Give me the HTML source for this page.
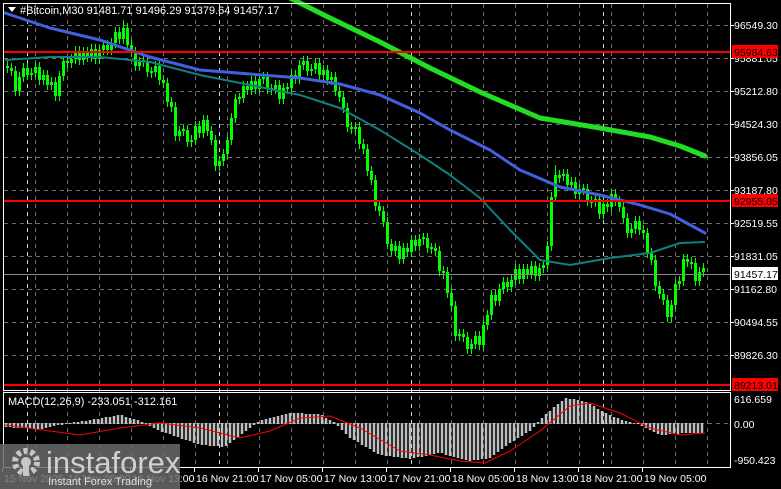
<!DOCTYPE html>
<html><head><meta charset="utf-8"><style>
html,body{margin:0;padding:0;background:#000;width:781px;height:489px;overflow:hidden}
svg{display:block;position:absolute;left:0;top:0}
</style></head><body>
<svg width="781" height="489" xmlns="http://www.w3.org/2000/svg" font-family="Liberation Sans, sans-serif">
<rect width="781" height="489" fill="#000"/>
<g stroke="#6e6e6e" stroke-dasharray="4,4" fill="none">
<path d="M4 25.5H730M4 58.5H730M4 91.5H730M4 124.5H730M4 157.5H730M4 190.5H730M4 223.5H730M4 256.5H730M4 289.5H730M4 322.5H730M4 355.5H730M4 423.5H730"/>
<path d="M3.5 4V467M35.5 4V467M67.5 4V467M99.5 4V467M131.5 4V467M163.5 4V467M195.5 4V467M227.5 4V467M259.5 4V467M291.5 4V467M323.5 4V467M355.5 4V467M387.5 4V467M419.5 4V467M451.5 4V467M483.5 4V467M515.5 4V467M547.5 4V467M579.5 4V467M611.5 4V467M643.5 4V467M675.5 4V467M707.5 4V467"/>
</g>
<path d="M27.5 4V467M219.5 4V467M411.5 4V467M603.5 4V467" stroke="#d0d0d0" stroke-dasharray="4,4" fill="none"/>

<path fill="none" stroke="#00ff00" stroke-width="1" d="M7.5 61V73M11.5 63V76M15.5 66V96M19.5 72V96M23.5 63V82M27.5 63V80M31.5 68V80M35.5 62V78M39.5 62V85M43.5 70V85M47.5 70V90M51.5 77V90M55.5 77V101M59.5 71V101M63.5 56V81M67.5 56V68M71.5 54V68M75.5 46V64M79.5 46V65M83.5 47V65M87.5 47V62M91.5 44V62M95.5 44V64M99.5 45V64M103.5 40V55M107.5 40V55M111.5 38V55M115.5 27V48M119.5 27V44M123.5 20V44M127.5 23V50M131.5 40V57M135.5 47V71M139.5 57V71M143.5 56V67M147.5 56V77M151.5 67V78M155.5 61V77M159.5 61V85M163.5 75V88M167.5 78V107M171.5 97V112M175.5 102V141M179.5 126V141M183.5 125V136M187.5 125V147M191.5 135V147M195.5 121V145M199.5 121V138M203.5 115V138M207.5 115V136M211.5 126V145M215.5 135V171M219.5 156V171M223.5 149V166M227.5 135V159M231.5 113V145M235.5 94V123M239.5 93V104M243.5 81V103M247.5 81V95M251.5 76V95M255.5 76V94M259.5 74V94M263.5 72V84M267.5 72V94M271.5 84V95M275.5 80V94M279.5 80V104M283.5 83V104M287.5 83V94M291.5 70V93M295.5 70V84M299.5 60V84M303.5 56V70M307.5 56V76M311.5 64V76M315.5 58V74M319.5 58V80M323.5 65V80M327.5 65V85M331.5 72V85M335.5 72V96M339.5 86V102M343.5 92V113M347.5 103V132M351.5 122V134M355.5 122V134M359.5 122V149M363.5 139V154M367.5 144V176M371.5 166V185M375.5 175V211M379.5 201V216M383.5 206V227M387.5 217V249M391.5 239V256M395.5 241V256M399.5 241V264M403.5 243V264M407.5 243V257M411.5 235V257M415.5 235V251M419.5 234V251M423.5 233V245M427.5 233V253M431.5 243V254M435.5 243V256M439.5 246V276M443.5 266V279M447.5 267V298M451.5 288V311M455.5 301V341M459.5 329V341M463.5 329V342M467.5 332V354M471.5 339V354M475.5 331V349M479.5 331V350M483.5 320V350M487.5 310V330M491.5 290V320M495.5 290V306M499.5 284V306M503.5 277V294M507.5 277V292M511.5 275V292M515.5 264V285M519.5 264V284M523.5 264V284M527.5 264V279M531.5 261V279M535.5 261V281M539.5 263V281M543.5 260V273M547.5 241V270M551.5 192V251M555.5 165V202M559.5 170V183M563.5 169V181M567.5 169V190M571.5 177V190M575.5 177V199M579.5 184V199M583.5 184V195M587.5 184V206M591.5 196V208M595.5 194V207M599.5 194V219M603.5 199V219M607.5 199V212M611.5 189V212M615.5 189V206M619.5 196V212M623.5 202V223M627.5 213V238M631.5 224V238M635.5 216V234M639.5 216V235M643.5 225V238M647.5 228V258M651.5 248V265M655.5 255V291M659.5 281V299M663.5 289V305M667.5 295V322M671.5 300V322M675.5 279V310M679.5 276V289M683.5 254V286M687.5 254V267M691.5 257V269M695.5 258V286M699.5 267V286M703.5 263V277"/>
<path fill="none" stroke="#00ff00" stroke-width="3" d="M7.5 66V68M11.5 68V71M15.5 71V91M19.5 91V77M23.5 77V68M27.5 68V75M31.5 75V73M35.5 73V67M39.5 67V80M43.5 80V75M47.5 75V85M51.5 85V82M55.5 82V96M59.5 96V76M63.5 76V61M67.5 61V63M71.5 63V59M75.5 59V51M79.5 51V60M83.5 60V52M87.5 52V57M91.5 57V49M95.5 49V59M99.5 59V50M103.5 50V45M107.5 45V50M111.5 50V43M115.5 43V32M119.5 32V39M123.5 39V28M127.5 28V45M131.5 45V52M135.5 52V66M139.5 66V62M143.5 62V60M147.5 61V72M151.5 71V73M155.5 72V66M159.5 66V80M163.5 80V83M167.5 83V102M171.5 102V107M175.5 107V136M179.5 136V131M183.5 131V129M187.5 130V142M191.5 142V140M195.5 140V126M199.5 126V133M203.5 133V120M207.5 120V131M211.5 131V140M215.5 140V166M219.5 166V161M223.5 161V154M227.5 154V140M231.5 140V118M235.5 118V99M239.5 99V97M243.5 98V86M247.5 86V90M251.5 90V81M255.5 81V89M259.5 89V79M263.5 79V77M267.5 77V89M271.5 88V90M275.5 89V85M279.5 85V99M283.5 99V88M287.5 87V89M291.5 88V75M295.5 75V79M299.5 79V65M303.5 65V61M307.5 61V71M311.5 71V69M315.5 69V63M319.5 63V75M323.5 75V70M327.5 70V80M331.5 80V77M335.5 77V91M339.5 91V97M343.5 97V108M347.5 108V127M351.5 127V129M355.5 129V127M359.5 127V144M363.5 144V149M367.5 149V171M371.5 171V180M375.5 180V206M379.5 206V211M383.5 211V222M387.5 222V244M391.5 244V251M395.5 251V246M399.5 246V259M403.5 259V248M407.5 248V252M411.5 252V240M415.5 240V246M419.5 246V239M423.5 239V237M427.5 238V248M431.5 247V249M435.5 248V251M439.5 251V271M443.5 271V273M447.5 272V293M451.5 293V306M455.5 306V336M459.5 336V334M463.5 334V337M467.5 337V349M471.5 349V344M475.5 344V336M479.5 336V345M483.5 345V325M487.5 325V315M491.5 315V295M495.5 295V301M499.5 301V289M503.5 289V282M507.5 282V287M511.5 287V280M515.5 280V269M519.5 269V279M523.5 279V269M527.5 269V274M531.5 274V266M535.5 266V276M539.5 276V268M543.5 268V265M547.5 265V246M551.5 246V197M555.5 197V175M559.5 175V178M563.5 176V174M567.5 174V185M571.5 185V182M575.5 182V194M579.5 194V189M583.5 188V190M587.5 189V201M591.5 201V203M595.5 202V199M599.5 199V214M603.5 214V204M607.5 204V207M611.5 207V194M615.5 194V201M619.5 201V207M623.5 207V218M627.5 218V233M631.5 233V229M635.5 229V221M639.5 221V230M643.5 230V233M647.5 233V253M651.5 253V260M655.5 260V286M659.5 286V294M663.5 294V300M667.5 300V317M671.5 317V305M675.5 305V284M679.5 284V281M683.5 281V259M687.5 259V262M691.5 262V264M695.5 263V281M699.5 281V272M703.5 272V268"/>

<polyline points="290,-2 330,18 380,42 430,68 480,92 540,118 600,128 650,137 680,146 705,156" fill="none" stroke="#22dd22" stroke-width="5" stroke-linecap="round" stroke-linejoin="round"/>
<polyline points="5,60 50,57 100,57 150,62 200,75 250,85 300,95 340,108 380,130 420,155 450,175 480,198 510,230 540,260 570,265 610,258 650,253 680,243 705,242" fill="none" stroke="#0f8080" stroke-width="2" stroke-linejoin="round"/>
<polyline points="5,13 50,28 100,40 150,57 200,70 250,74 300,78 340,84 380,95 420,113 450,130 490,150 520,170 560,187 600,195 640,205 670,214 705,233" fill="none" stroke="#4060e0" stroke-width="3" stroke-linecap="round" stroke-linejoin="round"/>

<path fill="none" stroke="#c0c0c0" stroke-width="2.5" d="M6 423V427M10 423V427M14 423V428M18 423V428M22 423V428M26 423V428M30 423V428M34 423V429M38 423V429M42 423V429M46 423V428M50 423V427M54 423V426M58 423V425M62 423V425M66 423V424M70 423V424M74 424V422M78 424V422M82 424V421M86 424V421M90 424V420M94 424V419M98 424V419M102 424V418M106 424V417M110 424V417M114 424V416M118 424V415M122 424V415M126 424V417M130 424V418M134 424V419M138 424V420M142 424V422M146 423V424M150 423V426M154 423V428M158 423V430M162 423V432M166 423V433M170 423V434M174 423V436M178 423V437M182 423V439M186 423V440M190 423V441M194 423V443M198 423V444M202 423V445M206 423V445M210 423V446M214 423V446M218 423V446M222 423V447M226 423V446M230 423V443M234 423V440M238 423V437M242 423V434M246 423V431M250 423V428M254 423V425M258 424V422M262 424V420M266 424V419M270 424V418M274 424V417M278 424V416M282 424V415M286 424V414M290 424V413M294 424V413M298 424V413M302 424V413M306 424V414M310 424V414M314 424V414M318 424V414M322 424V415M326 424V418M330 424V420M334 424V422M338 423V426M342 423V430M346 423V434M350 423V438M354 423V440M358 423V442M362 423V445M366 423V447M370 423V449M374 423V452M378 423V454M382 423V455M386 423V456M390 423V456M394 423V457M398 423V457M402 423V458M406 423V458M410 423V459M414 423V458M418 423V457M422 423V457M426 423V456M430 423V455M434 423V454M438 423V453M442 423V453M446 423V455M450 423V456M454 423V457M458 423V458M462 423V459M466 423V460M470 423V461M474 423V460M478 423V460M482 423V459M486 423V459M490 423V458M494 423V455M498 423V452M502 423V449M506 423V446M510 423V443M514 423V441M518 423V438M522 423V436M526 423V433M530 423V431M534 423V427M538 424V422M542 424V418M546 424V414M550 424V411M554 424V407M558 424V404M562 424V401M566 424V398M570 424V399M574 424V399M578 424V400M582 424V401M586 424V402M590 424V404M594 424V406M598 424V409M602 424V411M606 424V413M610 424V415M614 424V417M618 424V418M622 424V420M626 424V421M630 424V422M634 423V424M638 423V424M642 423V426M646 423V428M650 423V430M654 423V432M658 423V434M662 423V435M666 423V435M670 423V434M674 423V434M678 423V434M682 423V433M686 423V433M690 423V433M694 423V433M698 423V433M702 423V433"/>
<polyline points="5,425 50,431 80,435 120,428 160,423 200,428 240,438 270,431 300,418 330,416 360,428 400,451 430,455 460,461 485,463 510,451 540,431 570,406 590,403 620,413 650,428 680,435 705,433" fill="none" stroke="#f00" stroke-width="1"/>

<rect x="3.5" y="3.5" width="727" height="387" fill="none" stroke="#fff"/>
<rect x="3.5" y="392.5" width="727" height="75" fill="none" stroke="#fff"/>
<path d="M4 52H730M4 201H730M4 385H730" stroke="#f00" stroke-width="2"/>
<path d="M4 274.5H730" stroke="#888"/>
<path d="M730 25.5h4M730 58.5h4M730 91.5h4M730 124.5h4M730 157.5h4M730 190.5h4M730 223.5h4M730 256.5h4M730 289.5h4M730 322.5h4M730 355.5h4" stroke="#fff"/>
<g font-size="10.5" fill="#fff">
<text x="734" y="29">96549.30</text>
<text x="734" y="62">95881.05</text>
<text x="734" y="95">95212.80</text>
<text x="734" y="128">94524.30</text>
<text x="734" y="161">93856.05</text>
<text x="734" y="194">93187.80</text>
<text x="734" y="227">92519.55</text>
<text x="734" y="260">91831.05</text>
<text x="734" y="293">91162.80</text>
<text x="734" y="326">90494.55</text>
<text x="734" y="359">89826.30</text>
<text x="734" y="403">616.659</text>
<text x="734" y="428">0.00</text>
<text x="734" y="464">-950.423</text>
</g>
<rect x="732" y="45" width="46" height="13" fill="#f00"/>
<rect x="732" y="194" width="46" height="13" fill="#f00"/>
<rect x="732" y="267" width="46" height="13" fill="#fff"/>
<rect x="732" y="378" width="46" height="13" fill="#f00"/>
<g font-size="10.5" fill="#000">
<text x="734" y="56">95984.63</text>
<text x="734" y="205">92955.05</text>
<text x="734" y="278">91457.17</text>
<text x="734" y="389">89213.01</text>
</g>
<path d="M2.5 468v4M66.5 468v4M130.5 468v4M194.5 468v4M258.5 468v4M322.5 468v4M386.5 468v4M450.5 468v4M514.5 468v4M578.5 468v4M642.5 468v4" stroke="#fff"/>
<g font-size="10.5" fill="#fff">
<text x="4" y="482">15 Nov 2025</text>
<text x="68" y="482">16 Nov 05:00</text>
<text x="132" y="482">16 Nov 13:00</text>
<text x="196" y="482">16 Nov 21:00</text>
<text x="260" y="482">17 Nov 05:00</text>
<text x="324" y="482">17 Nov 13:00</text>
<text x="388" y="482">17 Nov 21:00</text>
<text x="452" y="482">18 Nov 05:00</text>
<text x="516" y="482">18 Nov 13:00</text>
<text x="580" y="482">18 Nov 21:00</text>
<text x="644" y="482">19 Nov 05:00</text>
</g>
<g font-size="11" fill="#fff">
<text x="20" y="14">#Bitcoin,M30  91481.71 91496.29 91379.64 91457.17</text>
<text x="8" y="405">MACD(12,26,9) -233.051 -312.161</text>
</g>
<path d="M8 7 L16 7 L12 12 Z" fill="#fff"/>
<rect x="0" y="444" width="180" height="45" fill="#6a6a6a" opacity="0.85"/>
<circle cx="26" cy="462" r="11" fill="none" stroke="#c8c8c8" stroke-width="6" stroke-dasharray="4,3"/>
<circle cx="26" cy="462" r="5" fill="#c8c8c8"/>
<rect x="23" y="462" width="6" height="14" fill="#c8c8c8"/>
<text x="46" y="473" font-size="31" fill="#d0d0d0">instaforex</text>
<text x="48" y="485" font-size="11" fill="#e0e0e0">Instant Forex Trading</text>
</svg>
</body></html>
